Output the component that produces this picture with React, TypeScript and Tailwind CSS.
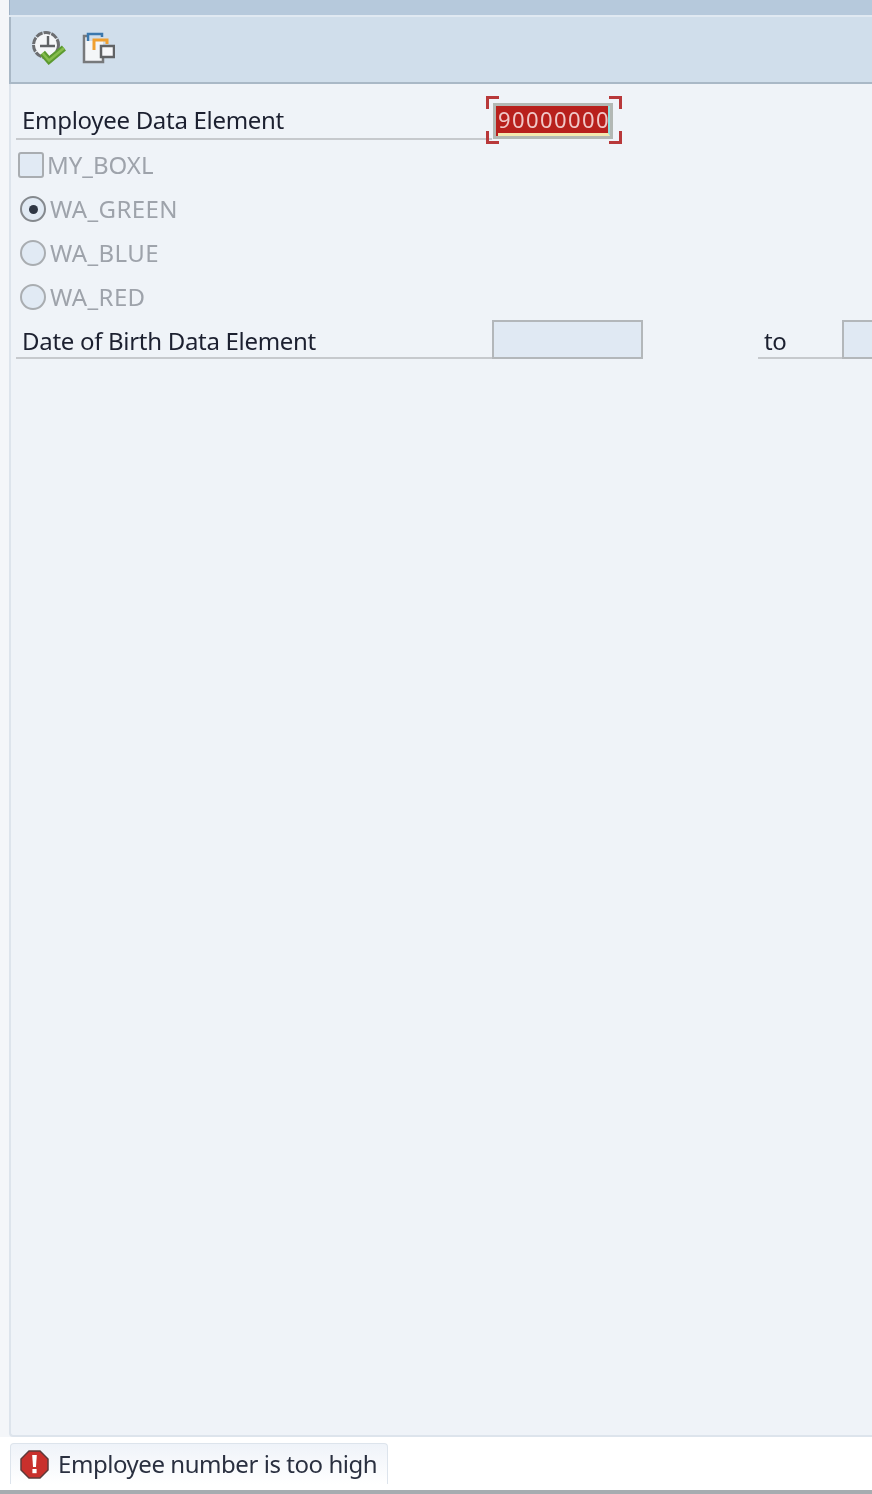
import React from 'react';

const font = "font-['Noto_Sans','Liberation_Sans',sans-serif]";

function ClockCheckIcon() {
  return (
    <svg width="34" height="34" viewBox="0 0 34 34" fill="none">
      <circle cx="14" cy="14" r="12.5" fill="#f4f6f8" stroke="#6c6e71" strokeWidth="3" strokeDasharray="7 1" />
      <path d="M16 5v11M8 15h15" stroke="#5f6265" strokeWidth="2.4" />
      <path d="M10.5 22l6.5 7.5L32 17" stroke="#5c9a30" strokeWidth="6.5" />
      <path d="M10.5 22l6.5 7.5L32 17" stroke="#86bd4c" strokeWidth="2.5" />
    </svg>
  );
}

function CopyWindowsIcon() {
  return (
    <svg width="34" height="34" viewBox="0 0 34 34" fill="none">
      <rect x="3" y="5" width="19" height="26" fill="#f4f6f8" />
      <path d="M9 5H3V31H22V26" stroke="#77797b" strokeWidth="2.5" />
      <rect x="8" y="4" width="14" height="6" fill="#d0deeb" />
      <path d="M7 10V3H21V6" stroke="#3a78ae" strokeWidth="2.5" />
      <path d="M13 19V9H26V13" stroke="#f0a030" strokeWidth="3" />
      <rect x="20" y="15" width="13" height="11" fill="#f7f8fa" stroke="#616365" strokeWidth="2.5" />
    </svg>
  );
}

function ErrorIcon() {
  return (
    <svg width="29" height="29" viewBox="0 0 29 29">
      <path d="M9 1h11l8 8v11l-8 8H9l-8-8V9z" fill="#c9302c" stroke="#5d3a3a" strokeWidth="1.5" />
      <path d="M12.2 5h4.6l-.8 12h-3z" fill="#fff" />
      <rect x="12.4" y="19" width="4.2" height="4.2" fill="#fff" />
    </svg>
  );
}

function Corner({ className }: { className: string }) {
  return <span className={`absolute h-[13px] w-[13px] border-[#b8383a] ${className}`} />;
}

function Radio({ checked, label }: { checked?: boolean; label: string }) {
  return (
    <div className="flex h-11 items-center pl-[9px]">
      <span className={`flex h-[26px] w-[26px] items-center justify-center rounded-full border-2 bg-[#e1eaf4] ${checked ? 'border-[#85898e]' : 'border-[#a9adb1]'}`}>
        {checked && <span className="h-[9px] w-[9px] rounded-full bg-[#2e3644]" />}
      </span>
      <span className="ml-[4px] text-[24px] leading-none tracking-[0.4px] text-[#9ea3ab]">{label}</span>
    </div>
  );
}

export default function App() {
  return (
    <div className={`flex h-[1494px] w-[872px] flex-col overflow-hidden bg-[#f4f6f9] blur-[0.6px] ${font}`}>
      <div className="ml-[9px] flex min-h-0 flex-1 flex-col">
        <div className="h-[15px] border-l border-[#9fb2c6] bg-[#b6c9dc]" />
        <div className="h-[2px] bg-[#e0e9f2]" />
        <div className="flex h-[67px] items-center gap-[15px] border-b-2 border-l-2 border-[#a9b8c6] bg-[#d0deeb] pb-[4px] pl-[21px]">
          <ClockCheckIcon />
          <CopyWindowsIcon />
        </div>

        <div className="flex min-h-0 flex-1 flex-col rounded-bl border-b-2 border-l-2 border-[#dde4ec] bg-[#eff3f8] pt-[12px]">
          <div className="flex h-[44px] items-end pl-[5px]">
            <div className="flex h-full w-[476px] shrink-0 items-center border-b-2 border-[#c6c9cd] pl-[6px] pt-[6px] text-[24px] leading-none tracking-[-0.3px] text-[#1c2030]">
              Employee Data Element
            </div>
            <div className="relative mb-[1px] ml-[1px] h-[36px] w-[120px] shrink-0 border-[3px] border-[#b3b8b4] bg-[#b8201c] pl-[2px] text-center text-[22px] leading-[27px] tracking-[1.4px] text-[#f0c8c8]">
              <div className="h-full border-b-[3px] border-r-[2px] border-b-[#f3e9b0] border-r-[#8fe0dc]">90000000</div>
              <Corner className="-left-[10px] -top-[10px] border-l-[3px] border-t-[3px]" />
              <Corner className="-right-[12px] -top-[10px] border-r-[3px] border-t-[3px]" />
              <Corner className="-bottom-[8px] -left-[10px] border-b-[3px] border-l-[3px]" />
              <Corner className="-bottom-[8px] -right-[12px] border-b-[3px] border-r-[3px]" />
            </div>
          </div>

          <div className="flex h-11 items-center pl-[7px] pt-[6px]">
            <span className="h-[26px] w-[26px] rounded-[3px] border-2 border-[#a9adb1] bg-[#e1eaf4]" />
            <span className="ml-[3px] text-[24px] leading-none text-[#9ea3ab]">MY_BOXL</span>
          </div>
          <div className="pb-[1px] pt-[3px]">
            <Radio checked label="WA_GREEN" />
            <Radio label="WA_BLUE" />
            <Radio label="WA_RED" />
          </div>

          <div className="flex h-[39px] items-stretch pl-[5px]">
            <div className="flex w-[476px] shrink-0 items-center border-b-2 border-[#c6c9cd] pl-[6px] pt-[4px] text-[24px] leading-none tracking-[-0.3px] text-[#1c2030]">
              Date of Birth Data Element
            </div>
            <div className="h-[39px] w-[151px] shrink-0 border-2 border-[#b3b7ba] bg-[#e0e9f3]" />
            <div className="ml-[115px] flex w-[84px] shrink-0 items-center border-b-2 border-[#c6c9cd] pl-[6px] pt-[4px] text-[24px] leading-none tracking-[-0.3px] text-[#1c2030]">
              to
            </div>
            <div className="h-[39px] w-[40px] shrink-0 border-2 border-r-0 border-[#b3b7ba] bg-[#e0e9f3]" />
          </div>
        </div>
      </div>

      <div className="flex h-[53px] items-start bg-white pl-[10px] pt-[6px]">
        <div className="flex h-[41px] w-[378px] items-center gap-[9px] rounded-t border-x border-t border-[#dde4ec] bg-gradient-to-b from-[#eff3f9] to-white pl-[9px]">
          <ErrorIcon />
          <span className="whitespace-nowrap text-[24px] leading-none tracking-[-0.45px] text-[#2a3040]">Employee number is too high</span>
        </div>
      </div>
      <div className="h-[4px] bg-[#a6acb0]" />
    </div>
  );
}
